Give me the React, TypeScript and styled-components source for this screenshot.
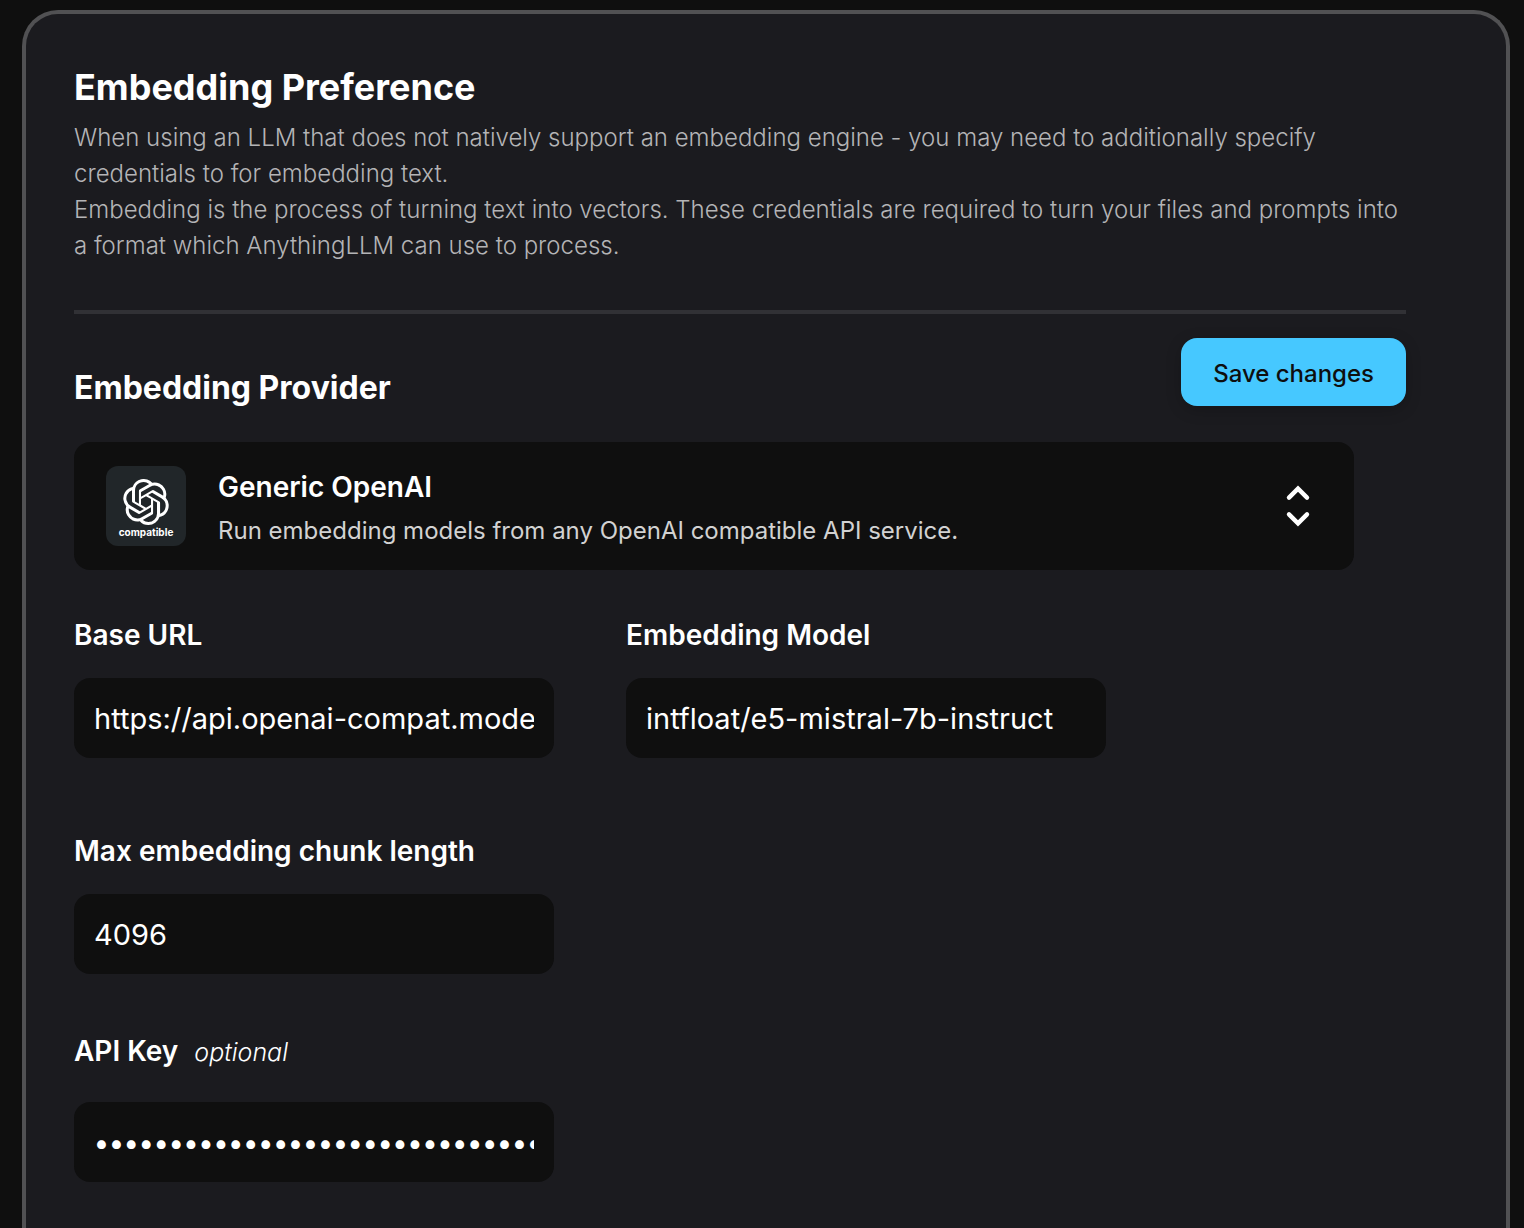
import React from "react";
import styled, { createGlobalStyle } from "styled-components";
import { SiOpenai } from "react-icons/si";

const GlobalStyle = createGlobalStyle`
  *, *::before, *::after { box-sizing: border-box; }
  body {
    margin: 0;
    background: #0f0f0f;
    color: #ffffff;
    font-family: Inter, "Liberation Sans", sans-serif;
  }
  button, input { font: inherit; color: inherit; }
`;

const Page = styled.div`
  min-height: 100vh;
  padding: 10px 14px 0 22px;
  display: flex;
`;

const Panel = styled.main`
  flex: 1;
  min-width: 0;
  padding: 49px 100px 46px 48px;
  background: #1b1b1f;
  border: 4px solid #515153;
  border-bottom: 0;
  border-radius: 36px 36px 0 0;
`;

const Header = styled.header`
  padding-bottom: 46px;
  border-bottom: 4px solid #313135;
`;

const Title = styled.h1`
  margin: 0 0 9px;
  font-size: 36px;
  line-height: 48px;
  font-weight: 700;
`;

const Description = styled.p`
  margin: 0;
  font-size: 24px;
  line-height: 36px;
  font-weight: 300;
  color: #b4b4b6;
`;

const ProviderBar = styled.div`
  display: flex;
  justify-content: space-between;
  align-items: flex-end;
  margin: 24px 0 36px;
`;

const Subtitle = styled.h2`
  margin: 0;
  font-size: 32px;
  line-height: 36px;
  font-weight: 700;
`;

const SaveButton = styled.button`
  height: 68px;
  padding: 2px 32px 0;
  border: 0;
  border-radius: 16px;
  background: #46c8ff;
  color: #0e0f0f;
  font-size: 24px;
  font-weight: 500;
  box-shadow: 0 4px 16px rgba(0, 0, 0, 0.2);
`;

const ProviderSelect = styled.button`
  display: flex;
  align-items: center;
  gap: 32px;
  width: 100%;
  max-width: 1280px;
  height: 128px;
  padding: 0 40px 0 32px;
  border: 0;
  border-radius: 16px;
  background: #0f0f0f;
  text-align: left;
`;

const Logo = styled.span`
  display: flex;
  flex-direction: column;
  align-items: center;
  flex: none;
  width: 80px;
  height: 80px;
  padding-top: 13px;
  border-radius: 12px;
  background: #212629;
`;

const LogoCaption = styled.span`
  font-size: 10px;
  line-height: 14px;
  font-weight: 700;
`;

const ProviderText = styled.span`
  display: flex;
  flex-direction: column;
  flex: 1;
  gap: 4px;
  padding-top: 6px;
`;

const ProviderName = styled.span`
  font-size: 28px;
  line-height: 40px;
  font-weight: 600;
`;

const ProviderNote = styled.span`
  font-size: 24px;
  line-height: 40px;
  color: #d2d2d2;
`;

const Fields = styled.form`
  display: flex;
  flex-direction: column;
  align-items: flex-start;
  margin-top: 44px;
`;

const FieldRow = styled.div<{ $space?: number }>`
  display: flex;
  flex-wrap: wrap;
  gap: 24px 72px;
  margin-top: ${(p) => p.$space ?? 0}px;
`;

const Field = styled.div<{ $gap?: number }>`
  display: flex;
  flex-direction: column;
  gap: ${(p) => p.$gap ?? 22}px;
  width: 480px;
`;

const Label = styled.label`
  font-size: 28px;
  line-height: 42px;
  font-weight: 600;
`;

const Optional = styled.i`
  margin-left: 16px;
  font-size: 25px;
  line-height: 1;
  font-weight: 300;
`;

const Input = styled.input`
  width: 100%;
  height: 80px;
  padding: 0 20px;
  border: 0;
  border-radius: 16px;
  outline: 0;
  background: #0f0f0f;
  font-size: 29px;
`;

const SecretInput = styled(Input)`
  padding-top: 2px;
  font-size: 28px;
  font-weight: 500;
`;

function Chevrons() {
  return (
    <svg width="32" height="48" viewBox="0 0 32 48" fill="none" stroke="#ffffff" strokeWidth="4.4" strokeLinecap="round" strokeLinejoin="miter" aria-hidden="true">
      <path d="M7 15.6 L16 6.6 L25 15.6" />
      <path d="M7 32.4 L16 41.4 L25 32.4" />
    </svg>
  );
}

export default function App() {
  return (
    <>
      <GlobalStyle />
      <Page>
        <Panel>
          <Header>
            <Title>Embedding Preference</Title>
            <Description>
              When using an LLM that does not natively support an embedding engine - you may need to
              additionally specify credentials to for embedding text.
              <br />
              Embedding is the process of turning text into vectors. These credentials are required to
              turn your files and prompts into a&nbsp;format which AnythingLLM can use to process.
            </Description>
          </Header>
          <ProviderBar>
            <Subtitle>Embedding Provider</Subtitle>
            <SaveButton type="submit" form="embedding-form">Save changes</SaveButton>
          </ProviderBar>
          <ProviderSelect type="button" aria-haspopup="listbox">
            <Logo>
              <SiOpenai size={46} aria-hidden="true" />
              <LogoCaption>compatible</LogoCaption>
            </Logo>
            <ProviderText>
              <ProviderName>Generic OpenAI</ProviderName>
              <ProviderNote>Run embedding models from any OpenAI compatible API service.</ProviderNote>
            </ProviderText>
            <Chevrons />
          </ProviderSelect>
          <Fields id="embedding-form">
            <FieldRow>
              <Field>
                <Label htmlFor="base-url">Base URL</Label>
                <Input id="base-url" type="url" defaultValue="https://api.openai-compat.model.com" />
              </Field>
              <Field>
                <Label htmlFor="model">Embedding Model</Label>
                <Input id="model" type="text" defaultValue="intfloat/e5-mistral-7b-instruct" />
              </Field>
            </FieldRow>
            <FieldRow $space={72}>
              <Field>
                <Label htmlFor="chunk">Max embedding chunk length</Label>
                <Input id="chunk" type="text" inputMode="numeric" defaultValue="4096" />
              </Field>
            </FieldRow>
            <FieldRow $space={56}>
              <Field $gap={30}>
                <Label htmlFor="api-key">
                  API Key<Optional>optional</Optional>
                </Label>
                <SecretInput id="api-key" type="password" autoComplete="off" defaultValue="0000000000000000000000000000000000000000" />
              </Field>
            </FieldRow>
          </Fields>
        </Panel>
      </Page>
    </>
  );
}
